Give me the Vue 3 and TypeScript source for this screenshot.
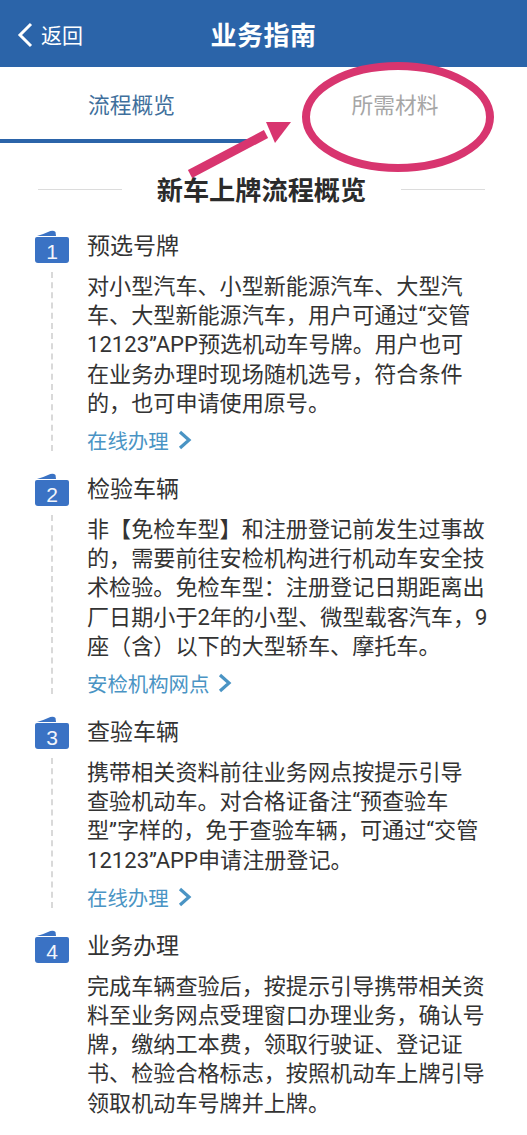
<script setup lang="ts">
interface Step {
  n: number
  title: string
  lines: string[]
  link?: string
}
const steps: Step[] = [
  {
    n: 1,
    title: '预选号牌',
    lines: [
      '对小型汽车、小型新能源汽车、大型汽',
      '车、大型新能源汽车，用户可通过“交管',
      '12123”APP预选机动车号牌。用户也可',
      '在业务办理时现场随机选号，符合条件',
      '的，也可申请使用原号。',
    ],
    link: '在线办理',
  },
  {
    n: 2,
    title: '检验车辆',
    lines: [
      '非【免检车型】和注册登记前发生过事故',
      '的，需要前往安检机构进行机动车安全技',
      '术检验。免检车型：注册登记日期距离出',
      '厂日期小于2年的小型、微型载客汽车，9',
      '座（含）以下的大型轿车、摩托车。',
    ],
    link: '安检机构网点',
  },
  {
    n: 3,
    title: '查验车辆',
    lines: [
      '携带相关资料前往业务网点按提示引导',
      '查验机动车。对合格证备注“预查验车',
      '型”字样的，免于查验车辆，可通过“交管',
      '12123”APP申请注册登记。',
    ],
    link: '在线办理',
  },
  {
    n: 4,
    title: '业务办理',
    lines: [
      '完成车辆查验后，按提示引导携带相关资',
      '料至业务网点受理窗口办理业务，确认号',
      '牌，缴纳工本费，领取行驶证、登记证',
      '书、检验合格标志，按照机动车上牌引导',
      '领取机动车号牌并上牌。',
    ],
  },
]
</script>

<template>
  <div class="page">
    <header class="bar">
      <div class="back">
        <svg class="back-icon" viewBox="0 0 16 26" width="16" height="26">
          <path d="M14 2 L3 13 L14 24" fill="none" stroke="#fff" stroke-width="3" />
        </svg>
        <span class="back-text">返回</span>
      </div>
      <h1 class="bar-title">业务指南</h1>
    </header>

    <nav class="tabs">
      <div class="tab active">流程概览</div>
      <div class="tab muted">所需材料</div>
    </nav>

    <div class="heading">
      <span class="rule"></span>
      <h2>新车上牌流程概览</h2>
      <span class="rule"></span>
    </div>

    <section class="steps">
      <article v-for="s in steps" :key="s.n" class="step">
        <div class="rail">
          <div class="badge">
            <svg class="badge-tab" viewBox="0 0 34 7" width="34" height="7">
              <path d="M2 6 Q9 4 13 2 Q18 -0.5 20.5 2 L21 6 Z" fill="#3a72c4" />
            </svg>
            <div class="badge-body">{{ s.n }}</div>
          </div>
          <div v-if="s.n < 4" class="dash"></div>
        </div>
        <div class="content">
          <h3>{{ s.title }}</h3>
          <p>
            <span v-for="l in s.lines" :key="l" class="line">{{ l }}</span>
          </p>
          <a v-if="s.link" class="link">
            {{ s.link }}
            <svg viewBox="0 0 14 20" width="14" height="20">
              <path d="M2 2 L11 10 L2 18" fill="none" stroke="#4a94c4" stroke-width="3.2" />
            </svg>
          </a>
        </div>
      </article>
    </section>

    <svg class="markup" viewBox="0 0 527 200" width="527" height="200">
      <ellipse cx="398" cy="117" rx="92" ry="51" fill="none" stroke="#d8356f" stroke-width="8" />
      <path d="M190 174 L266 134" stroke="#d8356f" stroke-width="9" fill="none" />
      <path d="M291 122 L266 122 L275 143 Z" fill="#d8356f" />
    </svg>
  </div>
</template>

<style>
html, body { margin: 0; background: #fff; }
</style>

<style scoped>
.page {
  position: relative;
  width: 527px;
  height: 1135px;
  overflow: hidden;
  background: #fff;
  font-family: Roboto, "Noto Sans CJK SC", "Noto Sans", sans-serif;
  color: #333;
}
.bar {
  height: 67px;
  background: #2b64a9;
  color: #fff;
  display: flex;
  align-items: center;
  justify-content: center;
  position: relative;
}
.back {
  position: absolute;
  left: 17px;
  top: 21px;
  display: flex;
  align-items: center;
  gap: 8px;
  font-size: 21px;
  line-height: 26px;
}
.back-text {
  padding-top: 2px;
}
.bar-title {
  margin: 0;
  padding-top: 5px;
  font-size: 26px;
  line-height: 32px;
  font-weight: 700;
  letter-spacing: 0.5px;
}
.tabs {
  display: flex;
  height: 76px;
}
.tab {
  box-sizing: border-box;
  font-size: 21.7px;
  text-align: center;
  padding-top: 23px;
  line-height: 32px;
}
.tab.active {
  color: #3f6f9c;
  width: 250px;
  padding-left: 13px;
  border-bottom: 4px solid #2b64a9;
}
.tab.muted {
  color: #a6a6a6;
  width: 277px;
  padding-left: 13px;
}
.heading {
  display: flex;
  align-items: center;
  justify-content: center;
  gap: 35px;
  margin-top: 30px;
  height: 36px;
  padding-right: 4px;
}
.heading h2 {
  margin: 0;
  font-size: 26.2px;
  line-height: 36px;
  font-weight: 700;
  color: #2b2b2b;
  white-space: nowrap;
}
.rule {
  width: 84px;
  height: 1px;
  background: #dcdcdc;
  margin-top: -4px;
}
.steps {
  margin-top: 20px;
  padding-left: 35px;
}
.step {
  display: flex;
}
.rail {
  width: 52px;
  flex: none;
  position: relative;
}
.badge {
  width: 34px;
  position: relative;
  margin-top: 1px;
  padding-top: 7px;
}
.badge-tab {
  display: block;
  position: absolute;
  left: 0;
  top: 0;
}
.badge-body {
  height: 26px;
  background: #3a72c4;
  border-radius: 2px 2px 3px 3px;
  color: #f2f5fb;
  font-family: "Liberation Sans", sans-serif;
  font-size: 21px;
  line-height: 29px;
  text-align: center;
}
.dash {
  position: absolute;
  left: 16px;
  top: 43px;
  bottom: 21px;
  border-left: 2px dashed #d9d9d9;
}
.content {
  flex: 1;
  min-width: 0;
}
.content h3 {
  margin: 0;
  font-size: 23px;
  font-weight: 400;
  line-height: 36px;
  color: #333;
}
.content p {
  margin: 7px 0 0;
  font-size: 22.1px;
  line-height: 29.2px;
  color: #333;
}
.line {
  display: block;
  white-space: nowrap;
}
.link {
  display: flex;
  align-items: center;
  gap: 9px;
  margin-top: 6px;
  height: 32px;
  margin-bottom: 16px;
  font-size: 20.4px;
  color: #4a94c4;
}
.markup {
  position: absolute;
  left: 0;
  top: 0;
  pointer-events: none;
}
</style>
